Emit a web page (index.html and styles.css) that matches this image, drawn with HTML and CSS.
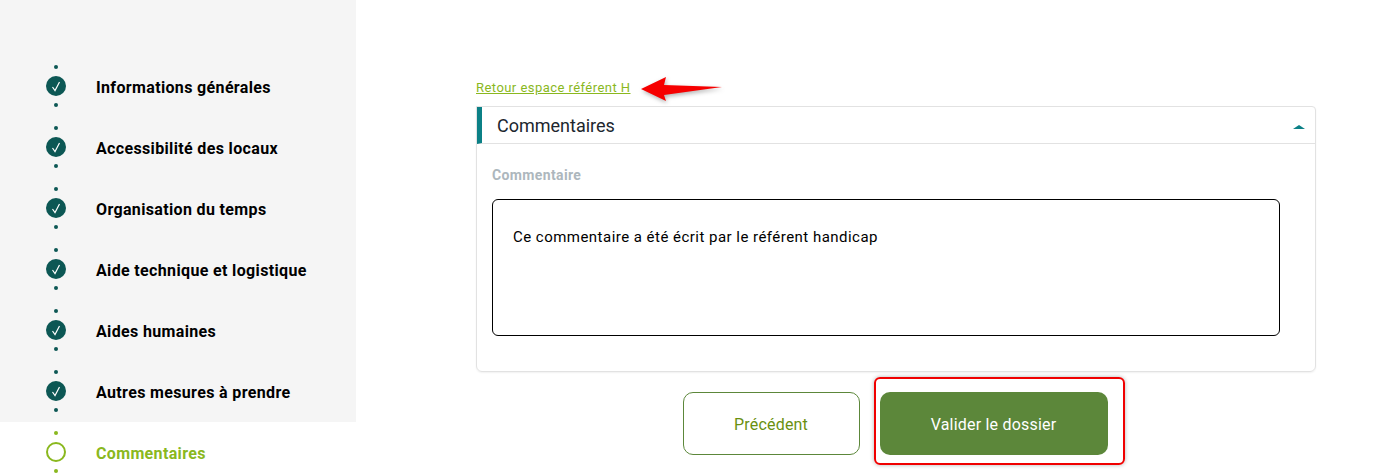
FILE: index.html
```html
<!DOCTYPE html>
<html lang="fr">
<head>
    <meta charset="UTF-8">
    <title>Commentaires</title>
    <link rel="stylesheet" href="styles.css">
</head>
<body>
    <div class="page">
        <nav class="steps">
            <div class="step done">
                <div class="marker"><span class="dot"></span><span class="circle"><svg viewBox="0 0 20 20"><path d="M6.5 11 L9 14.5 L13.5 6"/></svg></span><span class="dot"></span></div>
                <span class="step-label">Informations générales</span>
            </div>
            <div class="step done">
                <div class="marker"><span class="dot"></span><span class="circle"><svg viewBox="0 0 20 20"><path d="M6.5 11 L9 14.5 L13.5 6"/></svg></span><span class="dot"></span></div>
                <span class="step-label">Accessibilité des locaux</span>
            </div>
            <div class="step done">
                <div class="marker"><span class="dot"></span><span class="circle"><svg viewBox="0 0 20 20"><path d="M6.5 11 L9 14.5 L13.5 6"/></svg></span><span class="dot"></span></div>
                <span class="step-label">Organisation du temps</span>
            </div>
            <div class="step done">
                <div class="marker"><span class="dot"></span><span class="circle"><svg viewBox="0 0 20 20"><path d="M6.5 11 L9 14.5 L13.5 6"/></svg></span><span class="dot"></span></div>
                <span class="step-label">Aide technique et logistique</span>
            </div>
            <div class="step done">
                <div class="marker"><span class="dot"></span><span class="circle"><svg viewBox="0 0 20 20"><path d="M6.5 11 L9 14.5 L13.5 6"/></svg></span><span class="dot"></span></div>
                <span class="step-label">Aides humaines</span>
            </div>
            <div class="step done">
                <div class="marker"><span class="dot"></span><span class="circle"><svg viewBox="0 0 20 20"><path d="M6.5 11 L9 14.5 L13.5 6"/></svg></span><span class="dot"></span></div>
                <span class="step-label">Autres mesures à prendre</span>
            </div>
            <div class="step active">
                <div class="marker"><span class="dot"></span><span class="circle"></span><span class="dot"></span></div>
                <span class="step-label">Commentaires</span>
            </div>
        </nav>

        <main class="content">
            <div class="back-row">
                <a href="#" class="back-link">Retour espace référent H</a>
                <svg class="arrow" viewBox="0 0 84 26"><path d="M2 13 L27 1 L25 9 L83 11 L25 19 L27 25 Z"/></svg>
            </div>

            <section class="card">
                <header class="card-head">
                    <h2>Commentaires</h2>
                    <span class="caret"></span>
                </header>
                <div class="card-body">
                    <label class="field-label" for="comment">Commentaire</label>
                    <div class="comment-box" id="comment">Ce commentaire a été écrit par le référent handicap</div>
                </div>
            </section>

            <div class="actions">
                <button class="btn btn-outline">Précédent</button>
                <div class="highlight"><button class="btn btn-solid">Valider le dossier</button></div>
            </div>
        </main>
    </div>
</body>
</html>
```

FILE: styles.css
```css
html, body { height: 473px; overflow: hidden; }
body { margin: 0; background: white; font-family: Roboto, Arial, sans-serif; color: #000; }
.page { display: flex; align-items: flex-start; }

/* sidebar */
.steps { width: 356px; flex-shrink: 0; padding-top: 56px; background: linear-gradient(#f5f5f5 422px, white 422px); height: 427px; }
.step { height: 61px; display: flex; align-items: center; padding-left: 46px; box-sizing: border-box; }
.marker { width: 20px; height: 60px; align-self: flex-start; display: flex; flex-direction: column; align-items: center; justify-content: center; gap: 7px; margin-right: 30px; }
.dot { width: 4px; height: 4px; border-radius: 50%; background: #0c5754; }
.circle { width: 20px; height: 20px; border-radius: 50%; background: #0c5754; display: flex; }
.circle svg { width: 20px; height: 20px; }
.circle path { fill: none; stroke: white; stroke-width: 1.2; }
.step-label { font-size: 16px; font-weight: 700; letter-spacing: 0.35px; margin-top: 2px; }
.active .dot { background: #8ab81e; }
.active .circle { background: white; border: 2px solid #8ab81e; box-sizing: border-box; }
.active .step-label { color: #8ab81e; }

/* main column */
.content { width: 840px; margin-left: 120px; padding-top: 79px; }
.back-row { height: 27px; display: flex; align-items: flex-start; position: relative; }
.back-link { font-size: 13px; line-height: 18px; letter-spacing: 0.45px; color: #8ab81e; text-decoration: underline; }
.arrow { position: absolute; left: 163px; top: -3px; width: 84px; height: 26px; fill: #f60000; filter: drop-shadow(1px 2px 2px rgba(0,0,0,0.3)); }

.card { border: 1px solid #e2e2e2; border-radius: 0 4px 6px 6px; height: 266px; box-sizing: border-box; box-shadow: 0 1px 2px rgba(0,0,0,0.06); }
.card-head { height: 37px; display: flex; align-items: center; justify-content: space-between; border-bottom: 1px solid #e2e2e2; border-left: 5px solid #0b8086; box-sizing: border-box; padding: 0 10px 0 15px; }
.card-head h2 { margin: 0; font-size: 18px; font-weight: 400; color: #20262e; }
.caret { width: 0; height: 0; border-left: 6px solid transparent; border-right: 6px solid transparent; border-bottom: 4px solid #0b8086; margin-top: 3px; }
.card-body { padding: 24px 35px 0 15px; }
.field-label { display: block; font-size: 14px; font-weight: 700; line-height: 14px; color: #adb7bd; letter-spacing: 0.37px; }
.comment-box { margin-top: 17px; height: 137px; box-sizing: border-box; border: 1px solid #000; border-radius: 6px; padding: 28px 20px; font-size: 15px; line-height: 18px; letter-spacing: 0.47px; }

.actions { display: flex; justify-content: center; gap: 20px; margin-top: 20px; padding-right: 2px; }
.btn { height: 63px; padding-top: 2px; border-radius: 10px; font-family: inherit; font-size: 16px; letter-spacing: 0.2px; }
.btn-outline { width: 177px; background: white; border: 1px solid #5c873a; color: #6a9010; }
.btn-solid { width: 228px; background: #5c873a; border: none; color: white; }
.highlight { position: relative; }
.highlight::after { content: ""; position: absolute; left: -6px; right: -17px; top: -15px; bottom: -10px; border: 2px solid #f00000; border-radius: 6px; box-shadow: 0 0 4px rgba(0,0,0,0.3); }
```
